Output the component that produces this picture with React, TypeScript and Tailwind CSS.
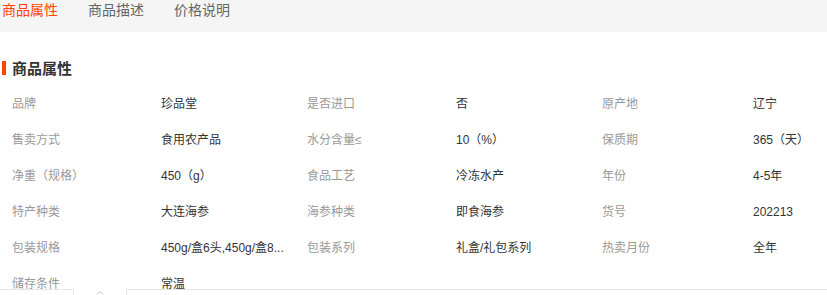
import React from "react";

const rows: [string, string, string, string, string, string][] = [
  ["品牌", "珍品堂", "是否进口", "否", "原产地", "辽宁"],
  ["售卖方式", "食用农产品", "水分含量≤", "10（%）", "保质期", "365（天）"],
  ["净重（规格）", "450（g）", "食品工艺", "冷冻水产", "年份", "4-5年"],
  ["特产种类", "大连海参", "海参种类", "即食海参", "货号", "202213"],
  ["包装规格", "450g/盒6头,450g/盒8...", "包装系列", "礼盒/礼包系列", "热卖月份", "全年"],
  ["储存条件", "常温", "", "", "", ""],
];

export default function App() {
  return (
    <div
      className="relative w-[827px] h-[295px] overflow-hidden bg-white"
      style={{ fontFamily: '"Noto Sans CJK SC", "Microsoft YaHei", sans-serif' }}
    >
      <div className="h-[32px] bg-[#f5f5f5] flex items-start pt-[1px] pl-[2px] gap-[30px] text-[14px] leading-[17px]">
        <span className="text-[#ff4400]">商品属性</span>
        <span className="text-[#666]">商品描述</span>
        <span className="text-[#666]">价格说明</span>
      </div>
      <div className="flex items-center mt-[28px] h-[16px] pl-[2px]">
        <span className="w-[4px] h-[14px] bg-[#ff4400]" />
        <span className="ml-[6px] text-[15px] leading-[16px] font-bold text-[#333]">商品属性</span>
      </div>
      <div
        className="mt-[10px] pl-[12px] grid grid-cols-[149px_146px_149px_146px_151px_1fr] text-[12px]"
        style={{ fontFamily: '"Liberation Sans", "Noto Sans CJK SC", sans-serif' }}
      >
        {rows.map((r, i) => (
          <React.Fragment key={i}>
            {r.map((c, j) => (
              <div
                key={j}
                className={
                  "h-[36px] flex items-center leading-[16px] whitespace-nowrap " +
                  (j % 2 === 0 ? "text-[#999]" : "text-[#333]")
                }
              >
                {c}
              </div>
            ))}
          </React.Fragment>
        ))}
      </div>
      <div className="absolute left-0 right-0 top-[289px] h-[6px] flex bg-white">
        <div className="w-[74px] border-t border-r border-[#e8e8e8]" />
        <div className="w-[52px] flex justify-center">
          <svg width="8" height="5" viewBox="0 0 8 5" className="mt-[1px]">
            <path d="M1 4.5 L4 1.5 L7 4.5" fill="none" stroke="#bbb" strokeWidth="1" />
          </svg>
        </div>
        <div className="flex-1 border-t border-l border-[#e5e5e5]" />
      </div>
    </div>
  );
}
